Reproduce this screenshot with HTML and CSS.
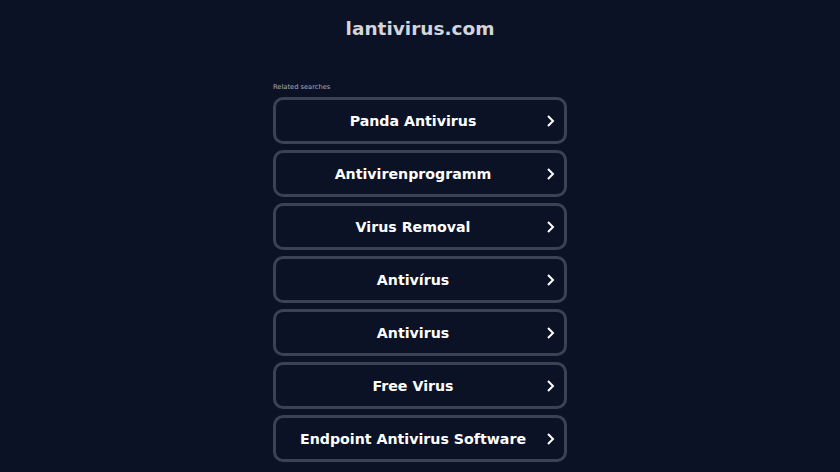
FILE: index.html
```html
<!DOCTYPE html>
<html lang="en">
<head>
    <meta charset="UTF-8">
    <meta name="viewport" content="width=device-width, initial-scale=1.0">
    <title>lantivirus.com</title>
    <link rel="stylesheet" href="styles.css">
</head>
<body>
    <header>
        <h1>lantivirus.com</h1>
    </header>

    <main>
        <div class="container">
            <p class="related">Related searches</p>
            <a class="search" href="#"><span>Panda Antivirus</span><svg viewBox="0 0 10 16"><path d="M3 3l5 5-5 5"/></svg></a>
            <a class="search" href="#"><span>Antivirenprogramm</span><svg viewBox="0 0 10 16"><path d="M3 3l5 5-5 5"/></svg></a>
            <a class="search" href="#"><span>Virus Removal</span><svg viewBox="0 0 10 16"><path d="M3 3l5 5-5 5"/></svg></a>
            <a class="search" href="#"><span>Antivírus</span><svg viewBox="0 0 10 16"><path d="M3 3l5 5-5 5"/></svg></a>
            <a class="search" href="#"><span>Antivirus</span><svg viewBox="0 0 10 16"><path d="M3 3l5 5-5 5"/></svg></a>
            <a class="search" href="#"><span>Free Virus</span><svg viewBox="0 0 10 16"><path d="M3 3l5 5-5 5"/></svg></a>
            <a class="search" href="#"><span>Endpoint Antivirus Software</span><svg viewBox="0 0 10 16"><path d="M3 3l5 5-5 5"/></svg></a>
        </div>
    </main>
</body>
</html>
```

FILE: styles.css
```css
/* Parked domain page */
body {
    font-family: "DejaVu Sans", sans-serif;
    margin: 0;
    padding: 0;
    background-color: #0b1226;
    color: #fff;
}

header {
    text-align: center;
    padding-top: 17px;
}

h1 {
    margin: 0;
    font-size: 18.5px;
    line-height: 24px;
    color: #d3d5db;
}

.container {
    width: 294px;
    margin: 0 auto;
    padding-top: 41px;
}

.related {
    margin: 0 0 5px 0;
    font-size: 6.7px;
    line-height: 10px;
    color: #a9adb7;
}

.search {
    position: relative;
    display: flex;
    align-items: center;
    justify-content: center;
    box-sizing: border-box;
    height: 47px;
    margin-bottom: 6px;
    border: 3px solid #3a4257;
    border-radius: 10px;
    color: #fff;
    text-decoration: none;
    font-size: 14.2px;
    font-weight: bold;
}

.search span {
    margin-left: -14px;
}

.search svg {
    position: absolute;
    right: 9px;
    top: 13px;
    width: 10px;
    height: 16px;
    fill: none;
    stroke: #fff;
    stroke-width: 2;
}
```
